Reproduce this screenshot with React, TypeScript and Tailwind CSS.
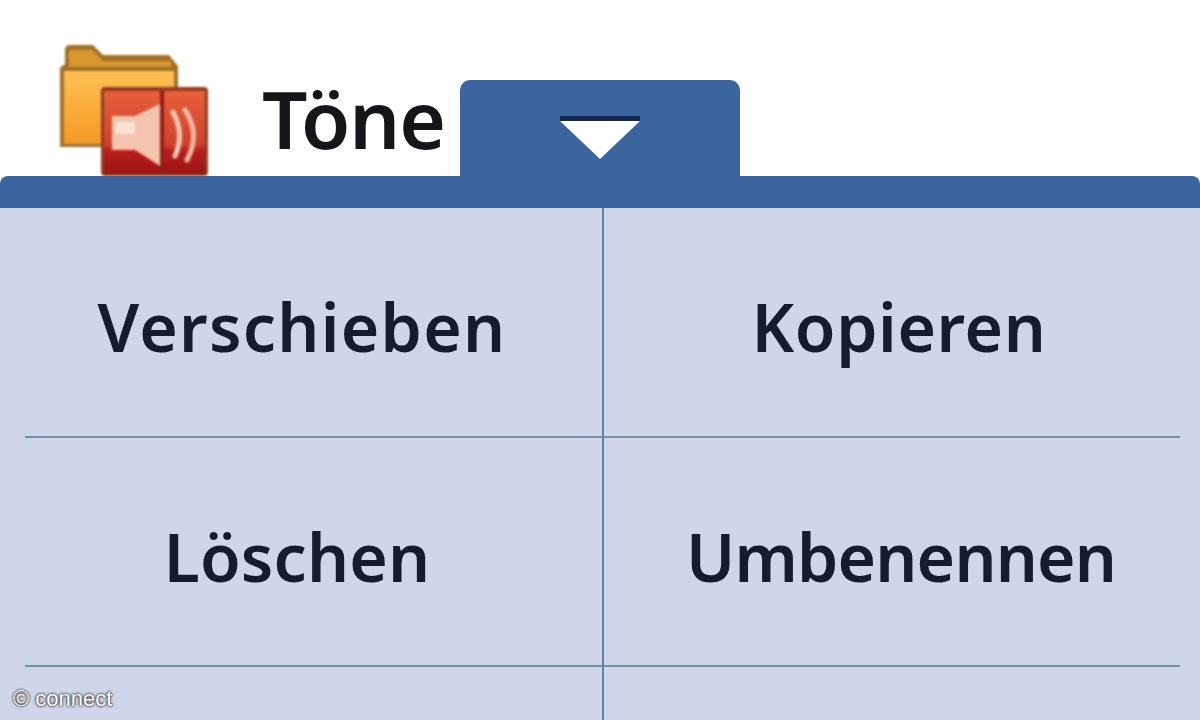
const font = "font-['Noto_Sans','Open_Sans',sans-serif]";

const FolderSoundIcon = () => (
  <svg width="150" height="132" viewBox="0 0 150 132" className="block blur-[1px]">
    <defs>
      <linearGradient id="folder" x1="0" y1="0" x2="0" y2="1">
        <stop offset="0" stopColor="#fdc053" />
        <stop offset="1" stopColor="#f49a26" />
      </linearGradient>
      <linearGradient id="speaker" x1="0" y1="0" x2="0" y2="1">
        <stop offset="0" stopColor="#e8603a" />
        <stop offset="0.65" stopColor="#d0402c" />
        <stop offset="0.72" stopColor="#b81d1d" />
        <stop offset="1" stopColor="#9c1414" />
      </linearGradient>
    </defs>
    <path d="M6 6 Q6 1 11 1 H34 L44 11 H110 L119 22 V40 H3 V22 L6 20 Z" fill="#a0702a" />
    <path d="M10 6 H33 L44 17 H112 V24 H10 Z" fill="#d9982f" />
    <path d="M1 23 H119 V103 H1 Z" fill="#a0702a" />
    <path d="M5 27 H115 V100 H5 Z" fill="url(#folder)" />
    <rect x="42" y="43" width="107" height="89" rx="4" fill="#8f3c22" />
    <rect x="45" y="47" width="101" height="83" fill="url(#speaker)" />
    <path d="M53 72 H76 L101 60 V122 L76 106 H53 Z" fill="#f3c4ae" />
    <path d="M56 78 H76 V90 H56 Z" fill="#f8e3d6" />
    <rect x="101" y="47" width="4" height="83" fill="#8e1f18" />
    <path d="M114 68 Q126 90 116 112" fill="none" stroke="#f3c9b0" strokeWidth="5" strokeLinecap="round" />
    <path d="M126 66 Q142 90 128 116" fill="none" stroke="#eeb8a0" strokeWidth="5" strokeLinecap="round" />
  </svg>
);

const Cell = ({ label, right, bottom, shift }: { label: string; right?: boolean; bottom?: boolean; shift: string }) => (
  <div className={`relative flex h-full items-center justify-center ${right ? "" : "border-r-2 border-[#66829f]"}`}>
    <span className={`${font} ${shift} mt-[6px] text-[66px] font-semibold leading-none text-[#151c30] blur-[0.5px]`}>
      {label}
    </span>
    {bottom && (
      <div className={`absolute bottom-0 h-[2px] bg-[#7790aa] ${right ? "left-0 right-[20px]" : "left-[25px] right-0"}`} />
    )}
  </div>
);

export default function App() {
  return (
    <div className="relative h-[720px] w-[1200px] overflow-hidden bg-white">
      {/* Title row */}
      <div className="flex h-[176px] items-end">
        <div className="ml-[59px]">
          <FolderSoundIcon />
        </div>
        <span className={`${font} ml-[53px] mb-[18px] w-[198px] text-[80px] font-semibold leading-none tracking-[-1px] text-[#15151a] blur-[0.5px]`}>
          Töne
        </span>
        <div className="flex h-[96px] w-[280px] items-center justify-center rounded-t-[10px] bg-[#3c659f]">
          <div className="mt-[19px] flex flex-col items-center blur-[0.6px]">
            <div className="h-[5px] w-[80px] bg-[#122a4f]" />
            <svg width="80" height="38" viewBox="0 0 80 38" className="block">
              <path d="M0 0 H80 L40 38 Z" fill="#ffffff" />
            </svg>
          </div>
        </div>
      </div>

      {/* Blue bar */}
      <div className="h-[32px] rounded-t-[8px] bg-[#3c659f]" />

      {/* Menu */}
      <div className="grid h-[512px] grid-cols-[604px_1fr] grid-rows-[230px_229px_53px] bg-[#d0d6e9]">
        <Cell label="Verschieben" bottom shift="ml-[2px] tracking-[1.3px]" />
        <Cell label="Kopieren" right bottom shift="ml-[-6px] tracking-[0.6px]" />
        <Cell label="Löschen" bottom shift="ml-[-8px] tracking-[0.2px]" />
        <Cell label="Umbenennen" right bottom shift="ml-[-2px] tracking-[-0.8px]" />
        <div className="border-r-2 border-[#66829f]" />
        <div />
      </div>

      {/* Watermark */}
      <div className="absolute bottom-[10px] left-[13px] font-['Liberation_Sans',sans-serif] text-[22px] leading-none text-white [text-shadow:0_0_3px_#222,0_0_2px_#222]">
        © connect
      </div>
    </div>
  );
}
